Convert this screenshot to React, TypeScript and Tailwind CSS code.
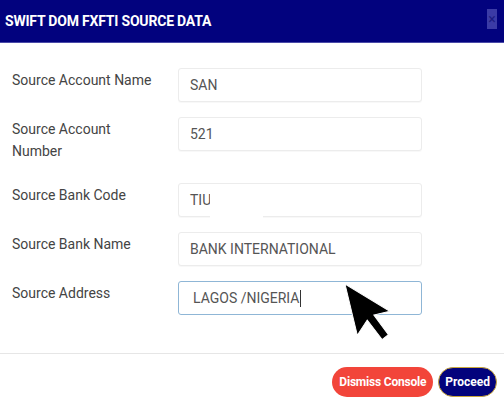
import React from 'react';

const rows = [
  { label: 'Source Account Name', value: 'SAN' },
  { label: 'Source Account Number', value: '521' },
  { label: 'Source Bank Code', value: 'TIU', masked: true },
  { label: 'Source Bank Name', value: 'BANK INTERNATIONAL' },
  { label: 'Source Address', value: 'LAGOS /NIGERIA', focused: true },
];

function Pointer() {
  return (
    <svg className="absolute left-[339px] top-[279px]" width="60" height="66" viewBox="0 0 60 66">
      <g transform="translate(6 5) rotate(-13.5) scale(3.3)">
        <polygon points="0,0 0,16 4,12.2 7,19 9.2,18 6.3,11.2 11.3,11.2" fill="#000" stroke="#fff" strokeWidth="0.3" />
      </g>
    </svg>
  );
}

export default function App() {
  return (
    <div className="relative w-[504px] h-[403px] bg-white overflow-hidden" style={{ fontFamily: 'Roboto, "Liberation Sans", sans-serif' }}>
      <div className="h-[43px] bg-[#02027e] border-b border-[#4a4aa8] flex items-center justify-between pl-[5px] pr-[7px]">
        <span className="text-white font-bold text-[14px] tracking-[-0.2px]">SWIFT DOM FXFTI SOURCE DATA</span>
        <span className="w-[10px] h-[20px] bg-[#3b3ba6] text-[#1c1c82] text-[14px] leading-[20px] flex items-center justify-center mt-[-5px]">×</span>
      </div>

      <div className="pt-[25px] pl-[12px] pb-[38px] border-b border-[#e6e6e6] flex flex-col">
        {rows.map((r, i) => (
          <div key={r.label} className={`flex ${i === 1 ? 'mb-[21px]' : 'mb-[15px]'} last:mb-0`}>
            <label className="w-[166px] pr-[14px] text-[14px] leading-[22px] text-[#444] pt-[1px]">{r.label}</label>
            <div className="relative">
              <div
                className={`w-[244px] h-[34px] rounded-[3px] bg-white flex items-center text-[14px] text-[#555] ${
                  r.focused ? 'border border-[#8fb6d6] pl-[14px]' : 'border border-[#ececec] pl-[11px] shadow-[0_1px_1px_rgba(0,0,0,0.03)]'
                }`}
              >
                <span>{r.value}</span>
                {r.focused && <span className="w-[1px] h-[17px] bg-[#333] ml-[1px]" />}
              </div>
              {r.masked && <div className="absolute left-[32px] top-[3px] w-[53px] h-[35px] bg-white" />}
            </div>
          </div>
        ))}
      </div>

      <div className="flex justify-end gap-[5px] pt-[13px] pr-[7px]">
        <button className="h-[30px] px-[7px] rounded-full bg-[#f2453a] text-white text-[12px] font-bold tracking-[-0.2px]">Dismiss Console</button>
        <button className="h-[30px] px-[6px] rounded-full bg-[#03037c] border border-[#c8a63c] text-white text-[12px] font-bold">Proceed</button>
      </div>

      <Pointer />
    </div>
  );
}
